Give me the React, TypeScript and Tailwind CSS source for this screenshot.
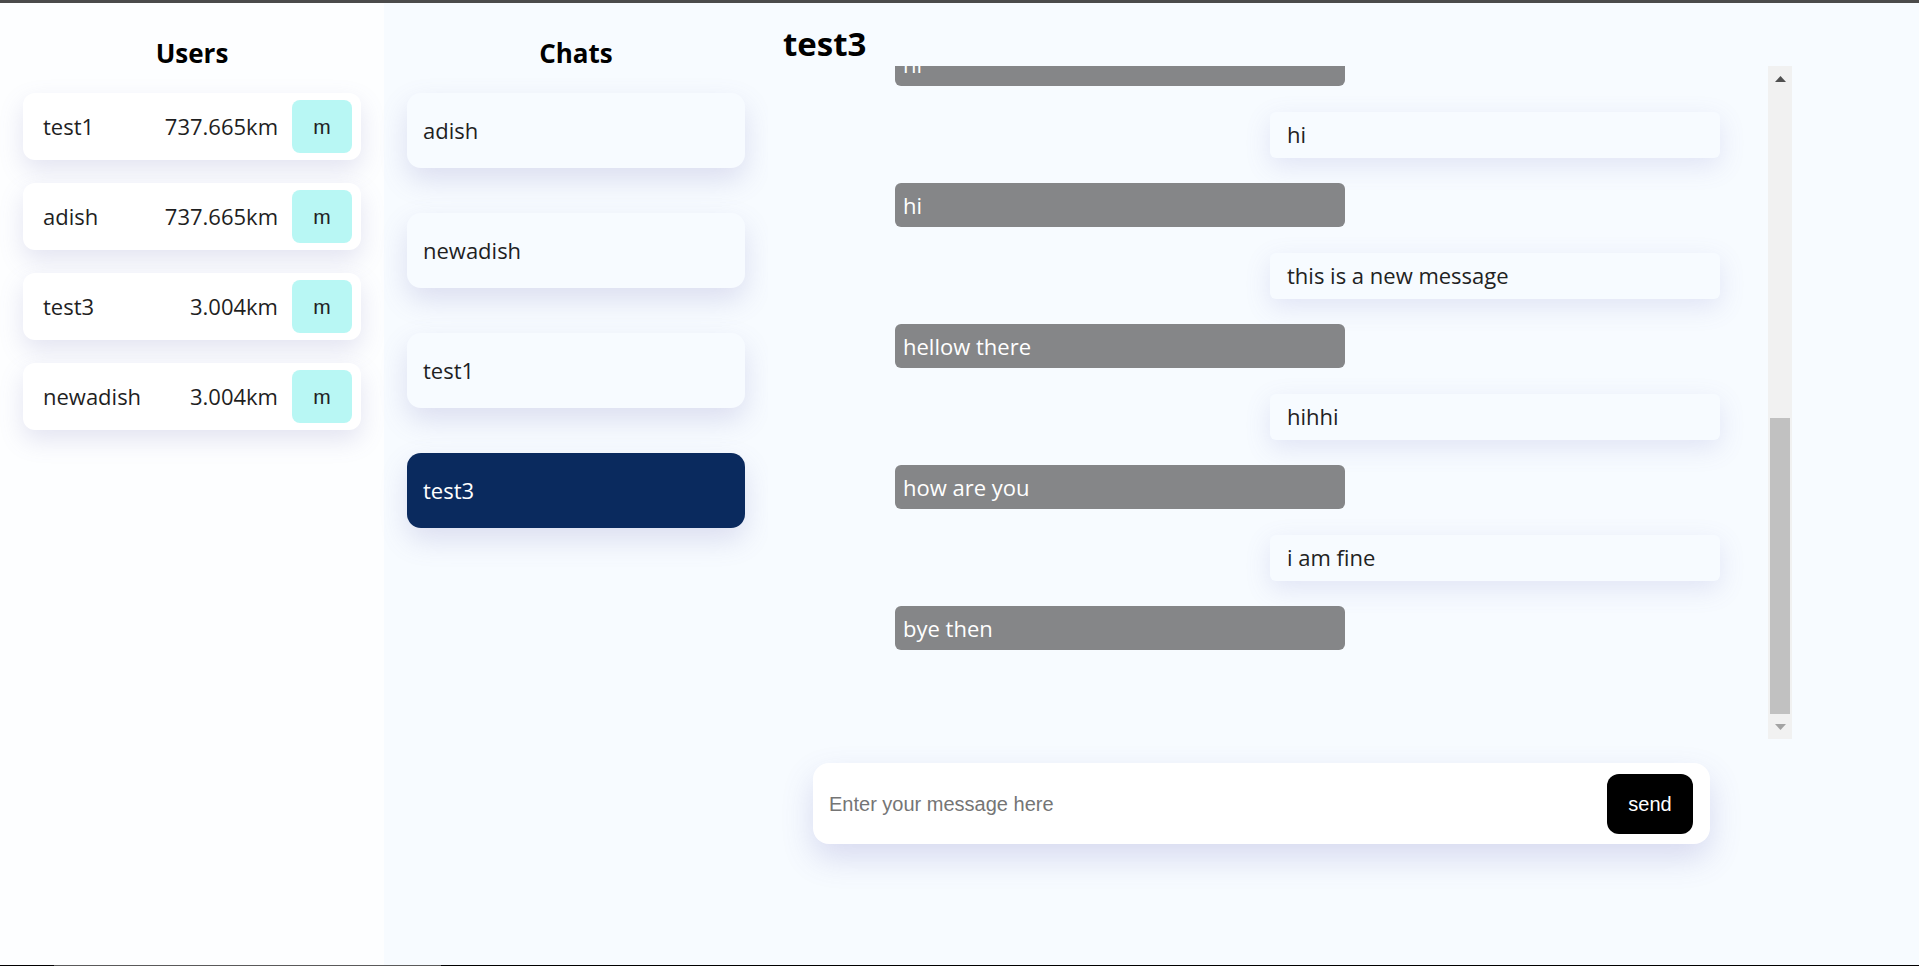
import React from "react";

const users = [
  { name: "test1", dist: "737.665km" },
  { name: "adish", dist: "737.665km" },
  { name: "test3", dist: "3.004km" },
  { name: "newadish", dist: "3.004km" },
];

const chats = [
  { name: "adish", active: false },
  { name: "newadish", active: false },
  { name: "test1", active: false },
  { name: "test3", active: true },
];

const messages: { text: string; mine: boolean }[] = [
  { text: "hello", mine: true },
  { text: "hi", mine: false },
  { text: "hi", mine: true },
  { text: "hi", mine: false },
  { text: "this is a new message", mine: true },
  { text: "hellow there", mine: false },
  { text: "hihhi", mine: true },
  { text: "how are you", mine: false },
  { text: "i am fine", mine: true },
  { text: "bye then", mine: false },
];

function Scrollbar() {
  return (
    <div className="w-[24px] h-full bg-[#f1f1f1] flex flex-col shrink-0">
      <div className="h-[25px] flex items-center justify-center">
        <svg width="11" height="6" viewBox="0 0 11 6">
          <path d="M0 6 L5.5 0 L11 6 Z" fill="#505050" />
        </svg>
      </div>
      <div className="flex-1 flex flex-col justify-end">
        <div className="h-[296px] mx-[2px] bg-[#c1c1c1]" />
      </div>
      <div className="h-[25px] flex items-center justify-center">
        <svg width="11" height="6" viewBox="0 0 11 6">
          <path d="M0 0 L5.5 6 L11 0 Z" fill="#a3a3a3" />
        </svg>
      </div>
    </div>
  );
}

export default function App() {
  return (
    <div
      className="w-[1919px] h-[966px] flex flex-col overflow-hidden"
      style={{ fontFamily: '"Open Sans", "Noto Sans", sans-serif' }}
    >
      <div className="h-[3px] bg-[#4b4b4b] shrink-0" />
      <div className="flex flex-1 min-h-0">
        {/* Users panel */}
        <aside className="w-[384px] shrink-0 bg-[#fdfeff] px-[23px] pt-[32px]">
          <h2 className="text-center font-bold text-[26px] leading-[36px] text-black">
            Users
          </h2>
          <div className="mt-[22px] flex flex-col gap-[23px]">
            {users.map((u) => (
              <div
                key={u.name}
                className="h-[67px] bg-white rounded-[12px] flex items-center pl-[20px] pr-[9px] shadow-[0_10px_24px_rgba(110,110,180,0.18)]"
              >
                <span className="flex-1 text-[22px] text-[#1f1f1f]">{u.name}</span>
                <span className="text-[22px] text-[#1f1f1f]">{u.dist}</span>
                <button
                  className="ml-[14px] w-[60px] h-[53px] rounded-[8px] bg-[#b8f7f4] text-[21px] text-[#222]"
                  style={{ fontFamily: '"Liberation Sans", Arial, sans-serif' }}
                >
                  m
                </button>
              </div>
            ))}
          </div>
        </aside>

        {/* Chats panel */}
        <section className="w-[384px] shrink-0 bg-[#f7fbff] px-[23px] pt-[32px]">
          <h2 className="text-center font-bold text-[26px] leading-[36px] text-black">
            Chats
          </h2>
          <div className="mt-[22px] flex flex-col gap-[45px]">
            {chats.map((c) => (
              <div
                key={c.name}
                className={
                  c.active
                    ? "h-[75px] rounded-[14px] bg-[#0a2a5e] text-white flex items-center pl-[16px] text-[22px] shadow-[0_12px_28px_rgba(110,110,180,0.2)]"
                    : "h-[75px] rounded-[14px] bg-[#f7fbff] text-[#1f1f1f] flex items-center pl-[16px] text-[22px] shadow-[0_12px_28px_rgba(110,110,180,0.2)]"
                }
              >
                {c.name}
              </div>
            ))}
          </div>
        </section>

        {/* Chat area */}
        <main className="flex-1 bg-[#f7fbff] flex flex-col">
          <h1 className="mt-[19px] pl-[15px] font-bold text-[33px] leading-[44px] text-black">
            test3
          </h1>
          <div className="ml-[77px] w-[947px] h-[673px] flex shrink-0">
            <div className="flex-1 overflow-hidden flex flex-col justify-end gap-[25.5px] pl-[50px] pr-[48px] pb-[89px]">
              {messages.map((m, i) =>
                m.mine ? (
                  <div
                    key={i}
                    className="self-end shrink-0 w-[450px] h-[46px] rounded-[6px] bg-[#f7fbff] text-[#222] text-[22px] flex items-center pl-[17px] shadow-[0_8px_26px_rgba(110,110,190,0.16)]"
                  >
                    {m.text}
                  </div>
                ) : (
                  <div
                    key={i}
                    className="self-start shrink-0 w-[450px] h-[44px] rounded-[6px] bg-[#858688] text-white text-[22px] flex items-center pl-[8px]"
                  >
                    {m.text}
                  </div>
                )
              )}
            </div>
            <Scrollbar />
          </div>
          <div className="mt-[24px] ml-[45px] w-[897px] h-[81px] bg-white rounded-[16px] flex items-center pl-[16px] pr-[17px] shadow-[0_14px_32px_rgba(90,90,180,0.2)]">
            <input
              className="flex-1 bg-transparent outline-none text-[20px] text-[#222] placeholder:text-[#757575]"
              style={{ fontFamily: '"Liberation Sans", Arial, sans-serif' }}
              placeholder="Enter your message here"
            />
            <button
              className="w-[86px] h-[60px] rounded-[12px] bg-black text-white text-[20px]"
              style={{ fontFamily: '"Liberation Sans", Arial, sans-serif' }}
            >
              send
            </button>
          </div>
        </main>
      </div>
      <div className="h-[1px] bg-black flex shrink-0">
        <div className="ml-[54px] w-[387px] bg-[#5a5a5a]" />
      </div>
    </div>
  );
}
